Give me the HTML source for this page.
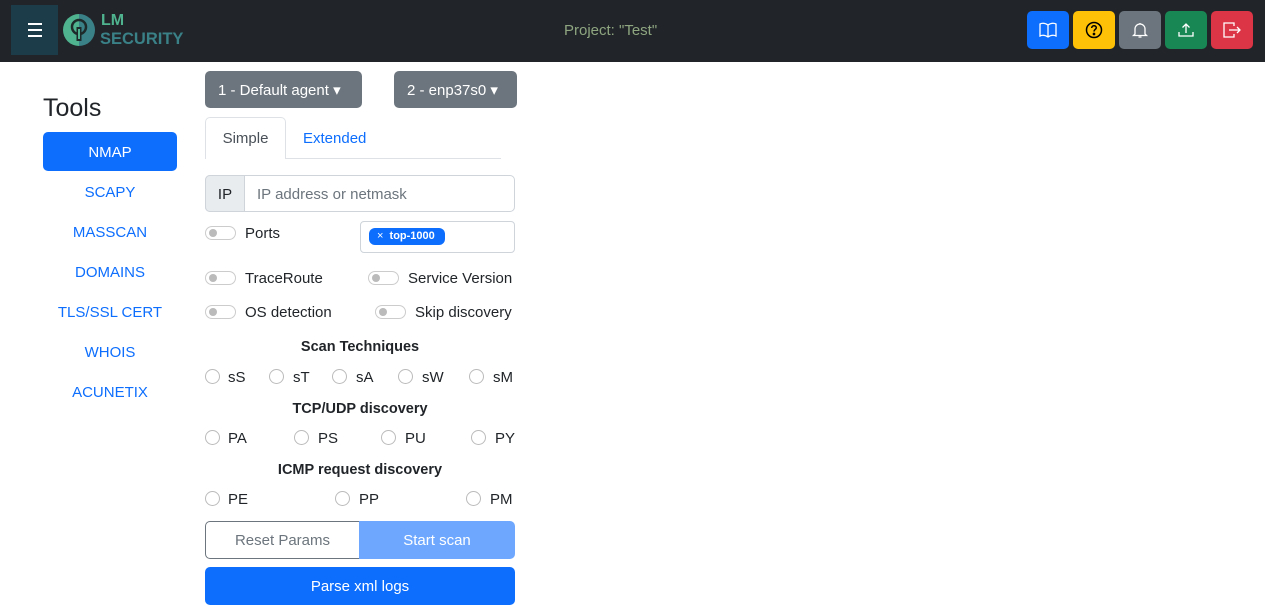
<!DOCTYPE html>
<html><head><meta charset="utf-8"><style>
*{box-sizing:border-box;margin:0;padding:0}
body{width:1265px;height:612px;background:#fff;font-family:"Liberation Sans",sans-serif;color:#212529;position:relative;overflow:hidden;font-size:15px}
.a{position:absolute}
.hdr{left:0;top:0;width:1265px;height:62px;background:#212529}
.hb{left:11px;top:5px;width:47px;height:50px;background:#1b3c48}
.hb i{position:absolute;left:17px;width:14px;height:2px;background:#fff}
.btn{top:11px;width:42px;height:38px;border-radius:5px;display:flex;align-items:center;justify-content:center}
.lnk{left:43px;width:134px;text-align:center;color:#0d6efd;font-size:15px;margin-top:2px}
.tg{width:31px;height:14px;border:1px solid #ccc;border-radius:8px}
.tg:after{content:"";position:absolute;left:3px;top:2px;width:8px;height:8px;border-radius:50%;background:#bbb}
.rd{width:15px;height:15px;border:1px solid #bbb;border-radius:50%}
.t{font-size:15px;white-space:nowrap;margin-top:2px}
.b{font-weight:bold;font-size:14.5px;text-align:center;width:310px;left:205px;margin-top:1px}
</style></head><body>
<div class="a hdr"></div>
<div class="a hb"><i style="top:18px"></i><i style="top:24px"></i><i style="top:30px"></i></div>
<svg class="a" style="left:63px;top:13px" width="32" height="34" viewBox="0 0 32 34"><path d="M16 1A16 16 0 0 0 16 33Z" fill="#4fb38f"/><path d="M16 1A16 16 0 0 1 16 33Z" fill="#3a8087"/><circle cx="16" cy="14" r="7" fill="none" stroke="#1e2a2a" stroke-width="2.5"/><rect x="13.5" y="14" width="5" height="14" fill="#1e2a2a"/><rect x="15" y="16" width="2" height="10" fill="#4fb38f"/></svg>
<div class="a" style="left:101px;top:12px;font-weight:bold;font-size:16px;color:#4fb38f">LM</div>
<div class="a" style="left:100px;top:30px;font-weight:bold;font-size:16.5px;color:#3a8087">SECURITY</div>
<div class="a" style="left:564px;top:22px;color:#8ea580;font-size:15px">Project: "Test"</div>
<div class="a btn" style="left:1027px;background:#0d6efd"><svg width="18" height="16" viewBox="0 0 18 16" fill="none" stroke="#fff" stroke-width="1.3"><path d="M9 3C6 1 3 1 1 2V14C3 13 6 13 9 15C12 13 15 13 17 14V2C15 1 12 1 9 3V15"/></svg></div>
<div class="a btn" style="left:1073px;background:#ffc107"><svg width="18" height="18" viewBox="0 0 18 18" fill="none" stroke="#000" stroke-width="1.5"><circle cx="9" cy="9" r="7.5"/><path d="M6.7 7C6.7 5.5 8 4.8 9 4.8C10.3 4.8 11.3 5.6 11.3 6.8C11.3 8.3 9 8.5 9 10.5"/><circle cx="9" cy="13" r=".6" fill="#000"/></svg></div>
<div class="a btn" style="left:1119px;background:#6c757d"><svg width="18" height="18" viewBox="0 0 18 18" fill="none" stroke="#fff" stroke-width="1.3"><path d="M4 13V8A5 5 0 0 1 14 8V13L15.5 14.5H2.5Z"/><path d="M7.5 16H10.5"/><path d="M9 2V3"/></svg></div>
<div class="a btn" style="left:1165px;background:#198754"><svg width="18" height="18" viewBox="0 0 18 18" fill="none" stroke="#fff" stroke-width="1.3"><path d="M2 11V15H16V11"/><path d="M9 12V3M5.5 6.5L9 3L12.5 6.5"/></svg></div>
<div class="a btn" style="left:1211px;background:#dc3545"><svg width="20" height="18" viewBox="0 0 20 18" fill="none" stroke="#fff" stroke-width="1.3"><path d="M12 5V2H2V16H12V13"/><path d="M7 9H18M15 6L18 9L15 12"/></svg></div>

<div class="a" style="left:43px;top:94px;font-size:25px">Tools</div>
<div class="a" style="left:43px;top:132px;width:134px;height:39px;background:#0d6efd;border-radius:5px;color:#fff;text-align:center;line-height:41px">NMAP</div>
<div class="a lnk" style="top:182px">SCAPY</div>
<div class="a lnk" style="top:222px">MASSCAN</div>
<div class="a lnk" style="top:262px">DOMAINS</div>
<div class="a lnk" style="top:302px">TLS/SSL CERT</div>
<div class="a lnk" style="top:342px">WHOIS</div>
<div class="a lnk" style="top:382px">ACUNETIX</div>

<div class="a" style="left:205px;top:71px;width:157px;height:37px;background:#6c757d;border-radius:5px;color:#fff;line-height:39px;padding-left:13px">1 - Default agent ▾</div>
<div class="a" style="left:394px;top:71px;width:123px;height:37px;background:#6c757d;border-radius:5px;color:#fff;line-height:39px;padding-left:13px">2 - enp37s0 ▾</div>
<div class="a" style="left:205px;top:158px;width:296px;height:1px;background:#dee2e6"></div>
<div class="a" style="left:205px;top:117px;width:81px;height:42px;border:1px solid #dee2e6;border-bottom:none;background:#fff;border-radius:5px 5px 0 0;text-align:center;line-height:42px;color:#495057">Simple</div>
<div class="a" style="left:303px;top:130px;color:#0d6efd">Extended</div>

<div class="a" style="left:205px;top:175px;width:310px;height:37px;border:1px solid #ced4da;border-radius:5px"></div>
<div class="a" style="left:205px;top:175px;width:40px;height:37px;border:1px solid #ced4da;border-radius:5px 0 0 5px;background:#e9ecef;text-align:center;line-height:37px">IP</div>
<div class="a" style="left:257px;top:186px;color:#6c757d">IP address or netmask</div>

<div class="a tg" style="left:205px;top:226px"></div><div class="a t" style="left:245px;top:223px">Ports</div>
<div class="a" style="left:360px;top:221px;width:155px;height:32px;border:1px solid #ced4da;border-radius:4px"></div>
<div class="a" style="left:369px;top:228px;width:76px;height:17px;background:#0d6efd;border-radius:6px;color:#fff;font-size:11px;line-height:17px;padding-left:8px">× &nbsp;<b>top-1000</b></div>

<div class="a tg" style="left:205px;top:271px"></div><div class="a t" style="left:245px;top:268px">TraceRoute</div>
<div class="a tg" style="left:368px;top:271px"></div><div class="a t" style="left:408px;top:268px">Service Version</div>
<div class="a tg" style="left:205px;top:305px"></div><div class="a t" style="left:245px;top:302px">OS detection</div>
<div class="a tg" style="left:375px;top:305px"></div><div class="a t" style="left:415px;top:302px">Skip discovery</div>

<div class="a b" style="top:338px">Scan Techniques</div>
<div class="a rd" style="left:205px;top:369px"></div><div class="a t" style="left:228px;top:367px">sS</div>
<div class="a rd" style="left:269px;top:369px"></div><div class="a t" style="left:293px;top:367px">sT</div>
<div class="a rd" style="left:332px;top:369px"></div><div class="a t" style="left:356px;top:367px">sA</div>
<div class="a rd" style="left:398px;top:369px"></div><div class="a t" style="left:422px;top:367px">sW</div>
<div class="a rd" style="left:469px;top:369px"></div><div class="a t" style="left:493px;top:367px">sM</div>
<div class="a b" style="top:400px">TCP/UDP discovery</div>
<div class="a rd" style="left:205px;top:430px"></div><div class="a t" style="left:228px;top:428px">PA</div>
<div class="a rd" style="left:294px;top:430px"></div><div class="a t" style="left:318px;top:428px">PS</div>
<div class="a rd" style="left:381px;top:430px"></div><div class="a t" style="left:405px;top:428px">PU</div>
<div class="a rd" style="left:471px;top:430px"></div><div class="a t" style="left:495px;top:428px">PY</div>
<div class="a b" style="top:461px">ICMP request discovery</div>
<div class="a rd" style="left:205px;top:491px"></div><div class="a t" style="left:228px;top:489px">PE</div>
<div class="a rd" style="left:335px;top:491px"></div><div class="a t" style="left:359px;top:489px">PP</div>
<div class="a rd" style="left:466px;top:491px"></div><div class="a t" style="left:490px;top:489px">PM</div>

<div class="a" style="left:205px;top:521px;width:155px;height:38px;border:1px solid #6c757d;border-radius:5px 0 0 5px;text-align:center;line-height:38px;color:#6c757d">Reset Params</div>
<div class="a" style="left:359px;top:521px;width:156px;height:38px;background:#6ea8fe;border-radius:0 5px 5px 0;text-align:center;line-height:40px;color:#fff">Start scan</div>
<div class="a" style="left:205px;top:567px;width:310px;height:38px;background:#0d6efd;border-radius:5px;text-align:center;line-height:40px;color:#fff">Parse xml logs</div>
</body></html>
